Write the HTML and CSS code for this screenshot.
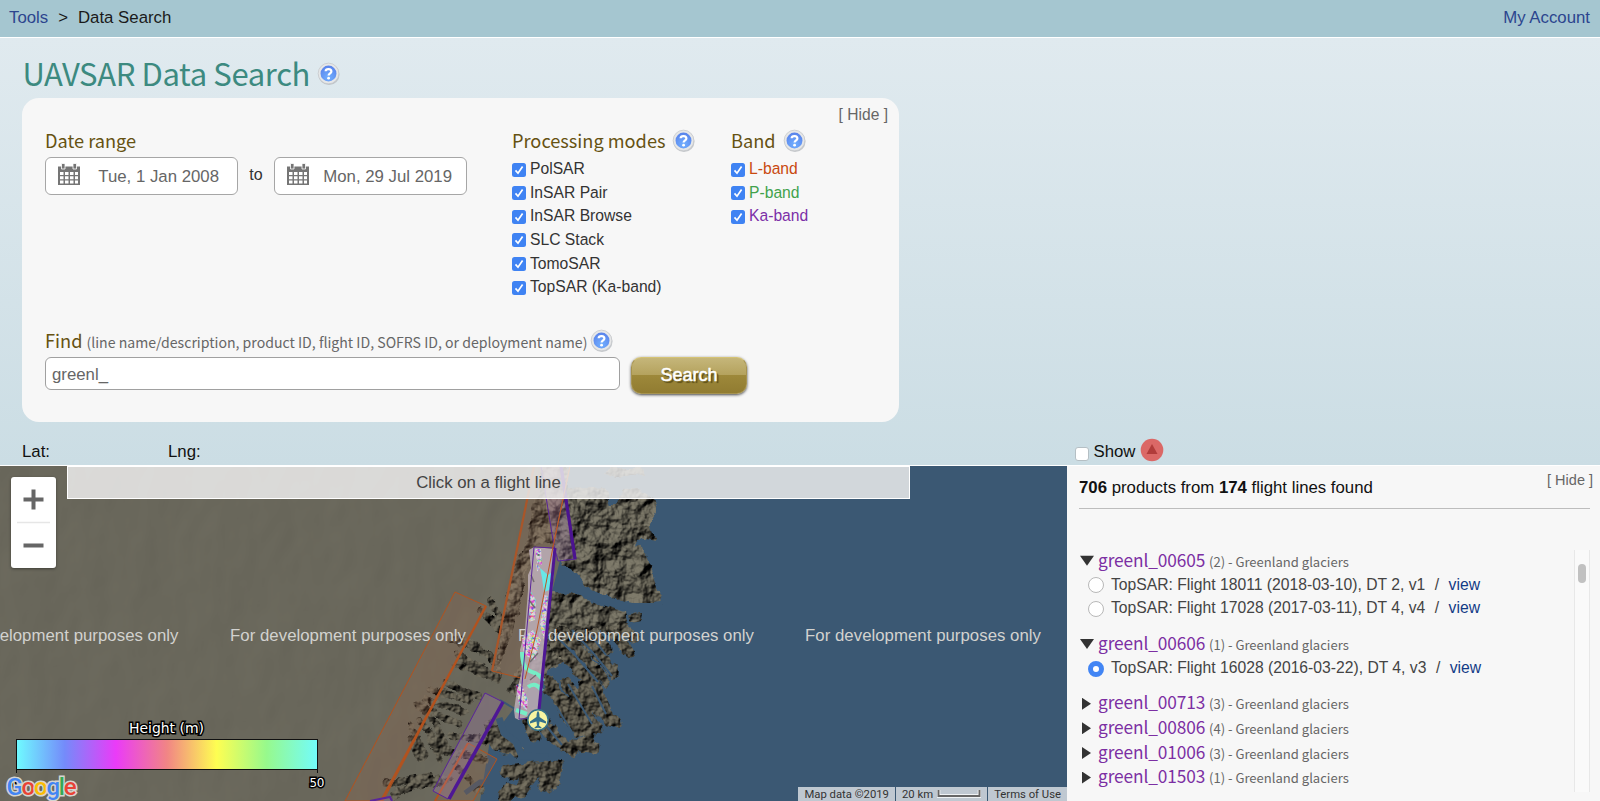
FILE: index.html
```html
<!DOCTYPE html>
<html lang="en">
<head>
<meta charset="utf-8">
<title>UAVSAR Data Search</title>
<link rel="stylesheet" href="styles.css">
</head>
<body>
<svg class="defs" width="0" height="0">
  <defs>
    <radialGradient id="hb" cx=".5" cy=".75" r=".7"><stop offset="0" stop-color="#72b0ff"/><stop offset="1" stop-color="#5a85ec"/></radialGradient>
    <symbol id="help" viewBox="0 0 24 24">
      <circle cx="12.5" cy="13" r="11" fill="#b4b8be" opacity=".75"/>
      <circle cx="12" cy="12" r="10.8" fill="#e6e7e8" stroke="#c6c8cb" stroke-width=".8"/>
      <circle cx="12" cy="12" r="8.3" fill="url(#hb)"/>
      <path d="M9 9.6C9.2 6.6 15 6.7 15 9.9C15 11.8 12.1 12 12.1 14.2" fill="none" stroke="#fff" stroke-width="2.3"/>
      <circle cx="12.1" cy="16.9" r="1.45" fill="#fff"/>
    </symbol>
    <symbol id="cal" viewBox="0 0 24 23">
      <path d="M1 3.5h22v18.500h-22z" fill="#757575"/>
      <path d="M4.500 0.500h3.500v5.500h-3.500zM16 0.500h3.500v5.500h-3.500z" fill="#757575" stroke="#fff" stroke-width=".8"/>
      <path d="M3 9h3.500v3H3zM8 9h3.500v3H8zM13 9h3.500v3H13zM18 9h3v3h-3zM3 13.200h3.500v3H3zM8 13.200h3.500v3H8zM13 13.200h3.500v3H13zM18 13.200h3v3h-3zM3 17.400h3.500v3H3zM8 17.400h3.500v3H8zM13 17.400h3.500v3H13zM18 17.400h3v3h-3z" fill="#fff"/>
    </symbol>
    <symbol id="tick" viewBox="0 0 14 14">
      <rect width="14" height="14" rx="2.500" fill="#3f83f3"/>
      <path d="M3.500 7.400L6 10.200L10.600 3.600" fill="none" stroke="#fff" stroke-width="1.7"/>
    </symbol>
  </defs>
</svg>
<header class="topbar">
  <div><a class="crumb">Tools</a><span class="sep">&gt;</span><span>Data Search</span></div>
  <a class="crumb">My Account</a>
</header>
<main class="upper">
  <div class="title"><h1>UAVSAR Data Search</h1><svg class="help"><use href="#help"/></svg></div>
  <section class="form">
    <div class="hide">[ Hide ]</div>
    <div class="cols">
      <div class="dates">
        <h2>Date range</h2>
        <div class="pick">
          <div class="date"><svg class="cal"><use href="#cal"/></svg><span>Tue, 1 Jan 2008</span></div>
          <span class="to">to</span>
          <div class="date"><svg class="cal"><use href="#cal"/></svg><span>Mon, 29 Jul 2019</span></div>
        </div>
      </div>
      <div class="modes">
        <h2>Processing modes<svg class="help"><use href="#help"/></svg></h2>
        <label><svg><use href="#tick"/></svg>PolSAR</label>
        <label><svg><use href="#tick"/></svg>InSAR Pair</label>
        <label><svg><use href="#tick"/></svg>InSAR Browse</label>
        <label><svg><use href="#tick"/></svg>SLC Stack</label>
        <label><svg><use href="#tick"/></svg>TomoSAR</label>
        <label><svg><use href="#tick"/></svg>TopSAR (Ka-band)</label>
      </div>
      <div class="bands">
        <h2>Band<svg class="help"><use href="#help"/></svg></h2>
        <label class="lband"><svg><use href="#tick"/></svg>L-band</label>
        <label class="pband"><svg><use href="#tick"/></svg>P-band</label>
        <label class="kband"><svg><use href="#tick"/></svg>Ka-band</label>
      </div>
    </div>
    <div class="find"><h2>Find</h2><span class="hint">(line name/description, product ID, flight ID, SOFRS ID, or deployment name)</span><svg class="help"><use href="#help"/></svg></div>
    <div class="query"><div class="field">greenl_</div><div class="btn">Search</div></div>
  </section>
  <div class="coords">
    <span class="lat">Lat:</span><span class="lng">Lng:</span>
    <div class="show"><i class="box"></i><span>Show</span>
      <svg width="24" height="24" viewBox="0 0 24 24"><circle cx="12" cy="12" r="11.300" fill="#db6866"/><path d="M12 6l5.500 10h-11z" fill="#b13c3a"/></svg>
    </div>
  </div>
</main>
<div class="lower">
  <div class="map">
    <svg class="terrain" viewBox="0 466 1067 335" width="1067" height="335">
      <defs>
        <filter id="plain" x="0" y="0" width="1" height="1" color-interpolation-filters="sRGB">
          <feTurbulence type="fractalNoise" baseFrequency=".02 .012" numOctaves="3" seed="8" result="n"/>
          <feDiffuseLighting in="n" surfaceScale=".5" lighting-color="#959281"><feDistantLight azimuth="225" elevation="45"/></feDiffuseLighting>
          <feComposite in2="SourceAlpha" operator="in"/>
        </filter>
        <filter id="rock" x="-.05" y="-.05" width="1.1" height="1.1" color-interpolation-filters="sRGB">
          <feTurbulence type="fractalNoise" baseFrequency=".06" numOctaves="4" seed="4" result="n"/>
          <feDisplacementMap in="SourceGraphic" in2="n" scale="12" xChannelSelector="R" yChannelSelector="G" result="d"/>
          <feDiffuseLighting in="n" surfaceScale="8" lighting-color="#7f7b6b"><feDistantLight azimuth="225" elevation="48"/></feDiffuseLighting>
          <feComposite in2="d" operator="in"/>
        </filter>
        <filter id="ridge" x="-.1" y="-.1" width="1.2" height="1.2" color-interpolation-filters="sRGB">
          <feTurbulence type="fractalNoise" baseFrequency=".1" numOctaves="3" seed="11" result="n"/>
          <feDisplacementMap in="SourceGraphic" in2="n" scale="7" xChannelSelector="R" yChannelSelector="G" result="d"/>
          <feDiffuseLighting in="n" surfaceScale="5" lighting-color="#767161"><feDistantLight azimuth="225" elevation="46"/></feDiffuseLighting>
          <feComposite in2="d" operator="in"/>
        </filter>
        <filter id="fringe" x="0" y="0" width="1" height="1" color-interpolation-filters="sRGB">
          <feTurbulence type="fractalNoise" baseFrequency=".32" numOctaves="2" seed="3"/>
          <feColorMatrix values="3.400 0 0 0 -.7  0 3.400 0 0 -.9  0 0 3.400 0 -.6  0 0 0 0 1"/>
          <feComposite in2="SourceAlpha" operator="in"/>
        </filter>
        <linearGradient id="ramp"><stop offset="0" stop-color="#6ffbff"/><stop offset=".16" stop-color="#748bfa"/><stop offset=".33" stop-color="#ea3bf8"/><stop offset=".5" stop-color="#f18585"/><stop offset=".665" stop-color="#fefe52"/><stop offset=".83" stop-color="#97f98c"/><stop offset="1" stop-color="#72fcfb"/></linearGradient>
      </defs>
      <rect y="466" width="1067" height="335" fill="#3b5873"/>
      <path d="M0 466H567V500L560 560L550 600L545 640L520 700L490 740L480 801H0z" fill="#69675b" filter="url(#plain)"/>
      <g filter="url(#rock)">
        <path d="M545 466L566 466L568 490L606 488L611 506L618 506L621 489L640 488L654 498L658 512L650 524L653 541L640 538L634 545L648 557L660 592L662 604L641 606L606 596L586 587L573 570L562 565L556 545L535 548L515 620L498 676L496 668L506 600L526 530z"/>
        <path d="M608 468L640 468L642 476L622 480L604 475zM627 614L645 613L644 622L630 624z"/>
        <path d="M553 590L571 591L600 604L624 612L627 623L618 626L632 632L612 634L600 630L590 640L572 636L565 660L550 670L520 700L505 690L530 650z"/>
      </g>
      <g filter="url(#ridge)" fill="none" stroke="#665f50" stroke-linecap="round" stroke-linejoin="round">
        <g stroke-width="11">
          <path d="M552 640L572 662L588 680M562 630L585 657L600 675M580 634L602 658L612 671M595 634L606 650M610 630L620 642L630 652M622 628L634 637"/>
          <path d="M566 682L585 710L596 728M583 690L590 706M584 684L600 712M596 685L608 720L616 722"/>
          <path d="M522 705L535 738M533 715L550 735L573 752M545 722L560 742M560 704L570 720L580 732M566 716L590 735M567 718L585 725M576 744L594 748M570 746L590 742"/>
          <path d="M550 690L570 705L582 720M548 680L560 700"/>
        </g>
        <g stroke-width="15">
          <path d="M508 772L545 768M520 790L535 770M545 785L552 768M510 790L505 796" />
          <path d="M558 764L554 784" stroke-width="9"/>
          <path d="M495 730L506 750M500 735L518 752M488 725L496 745" stroke-width="11"/>
        </g>
        <g stroke-width="7">
          <path d="M603 676L606 684M614 668L614 676"/>
          <path d="M452 640L480 650M462 638L490 656M475 645L497 664M455 664L490 676M430 690L470 700M445 682L478 697"/>
          <path d="M458 655L480 668L498 680M417 705L460 725M425 700L465 712M410 725L425 755M420 720L442 750M432 718L445 745M412 740L420 758M400 790L450 778M395 796L420 780M385 784L430 776M450 735L500 742M445 750L485 760M455 765L480 790M430 740L440 760M480 610L500 630M490 600L500 620"/>
        </g>
      </g>
      <g fill="none" stroke="#3b5873" stroke-linejoin="round">
        <path d="M562 568L576 588L604 600L628 607L655 607" stroke-width="8"/>
        <path d="M499 718L504 733L516 742L522 756L548 757" stroke-width="7"/>
        <path d="M500 700L515 709" stroke-width="2"/>
        <path d="M465 793L480 782L490 782" stroke-width="5" stroke="#44566a"/>
      </g>
      <g fill="none" stroke="#3b5873" stroke-width="2">
        <path d="M556 636L575 655L598 682M572 630L594 654L612 676M590 634L606 655M603 632L618 648M568 684L592 724M592 686L606 714M535 712L562 745M556 706L572 732"/>
      </g>
      <g fill="#a46b4a" fill-opacity=".2" stroke="#b3521e" stroke-width="1">
        <path d="M534 466L492 671L525 679L570 466z"/><path d="M534 466L492 671" stroke-width="2.200" stroke="#a9562a"/>
        <path d="M345 801L455 592L486 606L383 801z"/><path d="M486 606L381 801" stroke-width="2.300"/>
        <path d="M435 801L468 743L497 759L473 801z"/><path d="M468 743L435 801" stroke-width="2"/>
      </g>
      <g class="mark">
        <text x="-57.500" y="641" textLength="236">For development purposes only</text>
        <text x="230" y="641" textLength="236">For development purposes only</text>
        <text x="518" y="641" textLength="236">For development purposes only</text>
        <text x="805" y="641" textLength="236">For development purposes only</text>
      </g>
      <g>
        <path d="M534 547L555 549L547 640L539 712L519 720L515 718L514 710L517 690L522 670L520 650L525 630L528 590L528 575L531 568L529 550z" fill="#b9abb4" opacity=".9"/>
        <path d="M535 549L541 549L542 565L537 563zM530 590L536 600L535 620L529 622zM544 595L548 596L544 640L540 625zM522 638L533 630L541 640L535 660L524 655zM516 685L521 683L528 700L527 710L519 705zM536 563L540 568L537 572z" filter="url(#fringe)" opacity=".55"/>
        <path d="M540 568L548 575L554 571L552 589L544 592L542 578z" fill="#68e7e7"/>
        <path d="M522 652Q522 669 532 672Q540 674 543 681M528 687Q536 681 542 691M516 710L527 714" fill="none" stroke="#76edc6" stroke-width="4"/>
        <path d="M531 575L534 582M529 600L535 608M530 680L536 675M530 662L538 653" stroke="#746c70" stroke-width="1.500"/>
      </g>
      <g fill="#b98bc9" fill-opacity=".23" stroke="#5a259a">
        <path d="M541 466L554 546L558 561L576 559L561 466z"/><path d="M561 466L575 559" stroke-width="3.200" stroke="#4b1390"/>
        <path d="M534 547L555 548L538 718L519 719z" fill="none"/><path d="M555 548L539 710" stroke-width="3" stroke="#4e1795"/>
        <path d="M485 693L503 702L448 799L433 791z"/><path d="M503 702L449 799" stroke-width="3.500" stroke="#4e1795"/>
        <path d="M370 801L390 797L392 801" stroke-width="2"/>
      </g>
      <path d="M570 466L553 547L537 630L525 679" fill="none" stroke="#b95724"/>
      <g><circle cx="538" cy="720" r="10.200" fill="#f7f4a1" stroke="#36728b" stroke-width="1.500"/><path d="M538 711Q539.500 712 539.500 717L546 721.500V723.500L539.500 721.500L539 725.500L541.500 727.500V728.500L538 727.700L534.500 728.500V727.500L537 725.500L536.500 721.500L530 723.500V721.500L536.500 717Q536.500 712 538 711z" fill="#34708b"/></g>
      <g class="scale">
        <rect x="16.500" y="739.500" width="301" height="30" fill="url(#ramp)" stroke="#111"/>
        <path d="M16.500 769v4M317.500 769v4" stroke="#111"/>
        <text class="height" x="129" y="733" textLength="75">Height (m)</text>
        <text class="fifty" x="309.500" y="787" textLength="15">50</text><text class="fifty" x="12.500" y="787">0</text>
      </g>
      <text class="google" x="6.500" y="795" textLength="70"><tspan fill="#4285f4">G</tspan><tspan fill="#e94335">o</tspan><tspan fill="#fbbc05">o</tspan><tspan fill="#4285f4">g</tspan><tspan fill="#34a853">l</tspan><tspan fill="#e94335">e</tspan></text>
    </svg>
    <div class="banner">Click on a flight line</div>
    <div class="zoom"><svg width="45" height="91" viewBox="0 0 45 91"><path d="M12.500 22.500h20M22.500 12.500v20M12.500 68.500h20" stroke="#666" stroke-width="4"/><path d="M6 45.500h33" stroke="#e6e6e6" stroke-width="1.500"/></svg></div>
    <div class="legal"><span>Map data ©2019</span><span>20 km <svg width="44" height="10" viewBox="0 0 44 10"><path d="M1.500 1v6h41v-6" fill="none" stroke="#fff" stroke-width="3.500"/><path d="M1.500 1v6h41v-6" fill="none" stroke="#666" stroke-width="2"/></svg></span><span>Terms of Use</span></div>
  </div>
  <aside class="results">
    <div class="summary"><span><b>706</b> products from <b>174</b> flight lines found</span><span class="hide2">[ Hide ]</span></div>
    <div class="list">
      <div class="rows">
        <div class="line"><i class="open"></i><a>greenl_00605</a><span>(2) - Greenland glaciers</span></div>
        <div class="item"><i></i>TopSAR: Flight 18011 (2018-03-10), DT 2, v1<em>/</em><a>view</a></div>
        <div class="item"><i></i>TopSAR: Flight 17028 (2017-03-11), DT 4, v4<em>/</em><a>view</a></div>
        <div class="line gap"><i class="open"></i><a>greenl_00606</a><span>(1) - Greenland glaciers</span></div>
        <div class="item"><i class="on"></i>TopSAR: Flight 16028 (2016-03-22), DT 4, v3<em>/</em><a>view</a></div>
        <div class="line gap"><i class="shut"></i><a>greenl_00713</a><span>(3) - Greenland glaciers</span></div>
        <div class="line"><i class="shut"></i><a>greenl_00806</a><span>(4) - Greenland glaciers</span></div>
        <div class="line"><i class="shut"></i><a>greenl_01006</a><span>(3) - Greenland glaciers</span></div>
        <div class="line"><i class="shut"></i><a>greenl_01503</a><span>(1) - Greenland glaciers</span></div>
      </div>
      <div class="track"><div class="thumb"></div></div>
    </div>
  </aside>
</div>
</body>
</html>
```
FILE: styles.css
```css
* { box-sizing: border-box; }
body { margin: 0; width: 1600px; height: 801px; overflow: hidden; font: 16.8px/20px "Liberation Sans", Arial, sans-serif; color: #1a1a1a; display: flex; flex-direction: column; }
.defs { position: absolute; }
svg { display: block; flex: none; }
h1, h2, .hint, .line { font-family: "Noto Sans CJK JP", "Noto Sans CJK SC", sans-serif; font-weight: 400; margin: 0; }
.topbar { height: 38px; background: #a5c6d0; border-bottom: 1px solid #fff; padding: 0 10px 1px 9px; display: flex; justify-content: space-between; align-items: center; }
.crumb { color: #2c458e; }
.sep { margin: 0 10px; }
.upper { height: 427px; background: linear-gradient(#e0eaef, #cbdde4); padding: 17px 22px 0; }
.title { display: flex; align-items: center; height: 38px; }
h1 { font-size: 31px; letter-spacing: -.37px; line-height: 38px; color: #3c8a80; margin: -3px 0 0 .5px; }
.help { width: 23px; height: 23px; }
.title .help { margin: -1px 0 0 7px; }
.form { margin-top: 5px; width: 877px; height: 324px; background: #f7f7f7; border-radius: 17px; padding: 6px 11px 0 23px; }
.hide { text-align: right; font-size: 15.6px; line-height: 22px; color: #666; }
.cols { display: flex; margin-top: 2px; height: 199px; }
.dates { width: 467px; }
.modes { width: 219px; }
h2 { font-size: 18.2px; line-height: 24px; color: #665212; display: flex; align-items: center; white-space: nowrap; }
h2 .help { margin: 1px 0 0 7px; }
.pick { display: flex; margin-top: 5px; }
.date { width: 193px; height: 38px; border: 1px solid #a6a6a6; border-radius: 6px; background: #fff; display: flex; align-items: center; justify-content: space-between; padding: 1px 14px 0 11px; color: #666; }
.date:first-child { padding-right: 18px; }
.cal { width: 24px; height: 23px; margin-bottom: 4px; }
.to { width: 36px; text-align: center; line-height: 36px; font-size: 16px; color: #333; }
label { display: flex; align-items: center; height: 23.6px; font-size: 15.68px; color: #333; }
label svg { width: 14px; height: 14px; margin: 1px 4px 0 0; }
.modes h2, .bands h2 { margin-bottom: 5.4px; }
.lband { color: #c9490f; }
.pband { color: #41a24c; }
.kband { color: #7c2fa8; }
.find { display: flex; align-items: center; height: 26px; }
.hint { font-size: 14.1px; line-height: 24px; color: #666; margin: 4px 3px 0 4px; white-space: nowrap; }
.find .help { margin-top: 1px; }
.query { display: flex; margin-top: 4px; }
.field { width: 575px; height: 33px; border: 1px solid #a0a0a0; border-radius: 6px; background: #fff; padding: 7px 6px; line-height: 19px; color: #666; }
.btn { margin-left: 11px; width: 116px; height: 37px; border-radius: 10px; border: 1px solid #a69350; border-top-color: #d5c375; background: linear-gradient(#c5b67a, #b4a25d 49%, #9d883a 50%, #917c31); box-shadow: 0 1px 3px #444; color: #fff; font-size: 18px; line-height: 34px; text-align: center; text-shadow: 2px 2px 1px #5c4e17; -webkit-text-stroke: .5px #fff; }
.coords { display: flex; height: 43px; align-items: center; padding-top: 16px; color: #111; }
.lat { width: 146px; }
.lng { width: 907px; }
.show { display: flex; align-items: center; gap: 4.5px; padding-top: 1px; }
.show svg { margin-top: -4px; }
.box { width: 14px; height: 14px; border: 1px solid #b5bfc4; border-radius: 3px; background: #fff; margin-top: 3px; }
.lower { flex: 1; display: flex; border-top: 1px solid #fff; min-height: 0; }
.map { width: 1067px; position: relative; overflow: hidden; }
.mark { font: 16.8px "Liberation Sans", sans-serif; fill: #d2d2cf; }
.scale { font: 14px "DejaVu Sans", sans-serif; fill: #fff; }
.scale text { stroke: #000; stroke-width: 3px; paint-order: stroke; }
.scale .fifty { font-size: 12px; }
.google { font: 500 24px Roboto, sans-serif; stroke: #d5d5d1; stroke-width: 3px; paint-order: stroke; }
.banner { position: absolute; left: 67px; top: 0; width: 843px; height: 33px; border: 1px solid #fff; background: rgba(239, 239, 239, .84); color: #444; text-align: center; line-height: 32px; }
.zoom { position: absolute; left: 11px; top: 11px; background: #fff; border-radius: 3px; box-shadow: 0 1px 3px rgba(0, 0, 0, .4); }
.legal { position: absolute; right: 0; bottom: 0; height: 14px; display: flex; font: 11.3px/15px Roboto, sans-serif; color: #333; gap: 1px; }
.legal span { background: #bfc8d1; padding: 0 6px; display: flex; align-items: center; gap: 4px; white-space: nowrap; }
.results { flex: 1; background: #f7f7f7; padding: 0 6px 0 12px; }
.summary { height: 43px; margin-right: 4px; border-bottom: 1px solid #bdbdbd; display: flex; justify-content: space-between; line-height: 43px; color: #111; }
.hide2 { font-size: 14.500px; line-height: 29px; margin-right: -3px; color: #666; }
.list { display: flex; height: 242px; margin: 41px 4px 0 0; }
.rows { flex: 1; margin-top: -1.5px; }
.line { display: flex; height: 24.6px; line-height: 22px; align-items: baseline; font-size: 17.300px; }
.line a { color: #7c2fa3; width: 106px; letter-spacing: -.1px; }
.line span { font-size: 13.05px; color: #666; margin: 0 0 0 5px; }
.line i { width: 19px; height: 12px; align-self: center; }
.gap { margin-top: 11.5px; }
.open { background: #333; clip-path: polygon(1px 1px, 15px 1px, 8px 11px); }
.shut { background: #333; clip-path: polygon(3px 0, 12px 6px, 3px 12px); }
.item { display: flex; align-items: center; height: 23.6px; padding-left: 9px; font-size: 15.7px; color: #444; white-space: nowrap; }
.item i { width: 16px; height: 16px; border: 1px solid #b8b8b8; border-radius: 50%; background: #fff; margin: 1px 7px 0 0; }
.item .on { border: 5px solid #4285f4; }
.item em { font-style: normal; margin: 0 9.5px; }
.item a { color: #123a86; }
.track { width: 16px; height: 242px; border: solid #e8e8e8; border-width: 0 1px; background: #fafafa; padding: 14px 3px; }
.thumb { height: 19px; border-radius: 4px; background: #c1c1c1; }
```
